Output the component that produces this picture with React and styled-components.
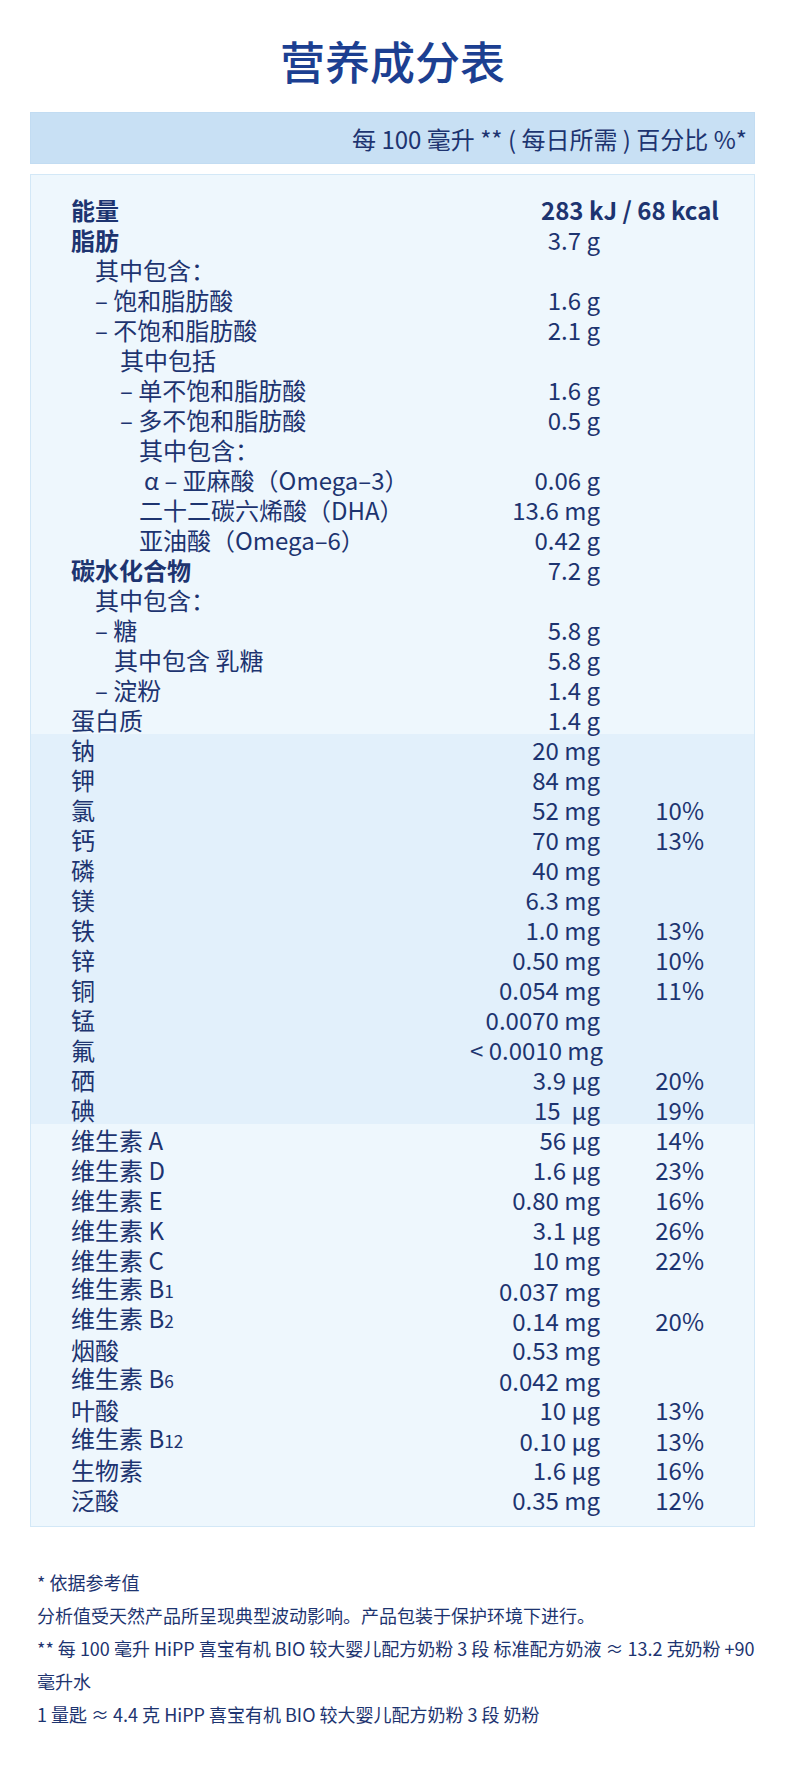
import styled, { createGlobalStyle } from "styled-components";

const GlobalStyle = createGlobalStyle`
  html, body {
    margin: 0;
    padding: 0;
    background: #fff;
  }
  body {
    font-family: "Noto Sans CJK SC", "Noto Sans", sans-serif;
    color: #1d3470;
  }
  * {
    box-sizing: border-box;
  }
`;

const Page = styled.div`
  width: 790px;
  min-height: 1787px;
  padding: 34px 35px 40px 30px;
`;

const Title = styled.h1`
  margin: 0 0 24px;
  text-align: center;
  font-size: 45px;
  line-height: 54px;
  font-weight: 500;
  color: #1c3f91;
`;

const HeaderBar = styled.div`
  height: 52px;
  display: flex;
  align-items: center;
  justify-content: flex-end;
  padding-right: 7px;
  background: #c8e0f4;
  border: 1px solid #c2dcf2;
  font-size: 24px;
  color: #1d3470;
`;

const Table = styled.div`
  margin-top: 10px;
  border: 1px solid #d3e8f7;
  background: #eef7fd;
`;

const Section = styled.div`
  background: ${(p) => p.$bg || "transparent"};
  padding-top: ${(p) => p.$top || 0}px;
  padding-bottom: ${(p) => p.$bottom || 0}px;
`;

const Row = styled.div`
  display: grid;
  grid-template-columns: 1fr 130px 104px;
  align-items: end;
  height: 30px;
  padding: 0 50px 0 40px;
  font-size: 24px;
  line-height: 28px;
  white-space: nowrap;
`;

const Label = styled.div`
  padding-left: ${(p) => p.$indent || 0}px;
  font-weight: ${(p) => (p.$bold ? 700 : 400)};
`;

const Value = styled.div`
  text-align: right;
`;

const EnergyValue = styled.div`
  grid-column: 2 / 4;
  padding-left: 71px;
  font-weight: 700;
`;

const Pct = styled.div`
  text-align: right;
`;

const Sub = styled.span`
  font-size: 0.72em;
`;

const Notes = styled.div`
  margin-top: 39px;
  padding-left: 7px;
  font-size: 18px;
  line-height: 33px;
  color: #1d3470;
`;

const NoteLine = styled.div`
  white-space: nowrap;
`;

const macros = [
  { label: "能量", energy: "283 kJ / 68 kcal", bold: true },
  { label: "脂肪", value: "3.7 g", bold: true },
  { label: "其中包含：", indent: 24 },
  { label: "– 饱和脂肪酸", value: "1.6 g", indent: 24 },
  { label: "– 不饱和脂肪酸", value: "2.1 g", indent: 24 },
  { label: "其中包括", indent: 49 },
  { label: "– 单不饱和脂肪酸", value: "1.6 g", indent: 49 },
  { label: "– 多不饱和脂肪酸", value: "0.5 g", indent: 49 },
  { label: "其中包含：", indent: 68 },
  { label: "α – 亚麻酸（Omega–3）", value: "0.06 g", indent: 73 },
  { label: "二十二碳六烯酸（DHA）", value: "13.6 mg", indent: 68 },
  { label: "亚油酸（Omega–6）", value: "0.42 g", indent: 68 },
  { label: "碳水化合物", value: "7.2 g", bold: true },
  { label: "其中包含：", indent: 24 },
  { label: "– 糖", value: "5.8 g", indent: 24 },
  { label: "其中包含 乳糖", value: "5.8 g", indent: 43 },
  { label: "– 淀粉", value: "1.4 g", indent: 24 },
  { label: "蛋白质", value: "1.4 g" },
];

const minerals = [
  ["钠", "20 mg"],
  ["钾", "84 mg"],
  ["氯", "52 mg", "10%"],
  ["钙", "70 mg", "13%"],
  ["磷", "40 mg"],
  ["镁", "6.3 mg"],
  ["铁", "1.0 mg", "13%"],
  ["锌", "0.50 mg", "10%"],
  ["铜", "0.054 mg", "11%"],
  ["锰", "0.0070 mg"],
  ["氟", "< 0.0010 mg"],
  ["硒", "3.9 µg", "20%"],
  ["碘", "15\u00a0\u00a0µg", "19%"],
];

const vitamins = [
  ["维生素 A", "56 µg", "14%"],
  ["维生素 D", "1.6 µg", "23%"],
  ["维生素 E", "0.80 mg", "16%"],
  ["维生素 K", "3.1 µg", "26%"],
  ["维生素 C", "10 mg", "22%"],
  ["维生素 B", "0.037 mg", null, "1"],
  ["维生素 B", "0.14 mg", "20%", "2"],
  ["烟酸", "0.53 mg"],
  ["维生素 B", "0.042 mg", null, "6"],
  ["叶酸", "10 µg", "13%"],
  ["维生素 B", "0.10 µg", "13%", "12"],
  ["生物素", "1.6 µg", "16%"],
  ["泛酸", "0.35 mg", "12%"],
];

const SimpleRows = ({ items }) =>
  items.map(([label, value, pct, sub], i) => (
    <Row key={i}>
      <Label>
        {label}
        {sub && <Sub>{sub}</Sub>}
      </Label>
      <Value>{value}</Value>
      <Pct>{pct}</Pct>
    </Row>
  ));

const App = () => {
  return (
    <>
      <GlobalStyle />
      <Page>
        <Title>营养成分表</Title>
        <HeaderBar>每 100 毫升 ** ( 每日所需 ) 百分比 %*</HeaderBar>

        <Table>
          <Section $top={19}>
            {macros.map((m, i) => (
              <Row key={i}>
                <Label $indent={m.indent} $bold={m.bold}>
                  {m.label}
                </Label>
                {m.energy ? (
                  <EnergyValue>{m.energy}</EnergyValue>
                ) : (
                  <>
                    <Value>{m.value}</Value>
                    <Pct />
                  </>
                )}
              </Row>
            ))}
          </Section>
          <Section $bg="#e2f0fb">
            <SimpleRows items={minerals} />
          </Section>
          <Section $bottom={12}>
            <SimpleRows items={vitamins} />
          </Section>
        </Table>

        <Notes>
          <NoteLine>* 依据参考值</NoteLine>
          <NoteLine>分析值受天然产品所呈现典型波动影响。产品包装于保护环境下进行。</NoteLine>
          <NoteLine>** 每 100 毫升 HiPP 喜宝有机 BIO 较大婴儿配方奶粉 3 段 标准配方奶液 ≈ 13.2 克奶粉 +90</NoteLine>
          <NoteLine>毫升水</NoteLine>
          <NoteLine>1 量匙 ≈ 4.4 克 HiPP 喜宝有机 BIO 较大婴儿配方奶粉 3 段 奶粉</NoteLine>
        </Notes>
      </Page>
    </>
  );
};

export default App;
